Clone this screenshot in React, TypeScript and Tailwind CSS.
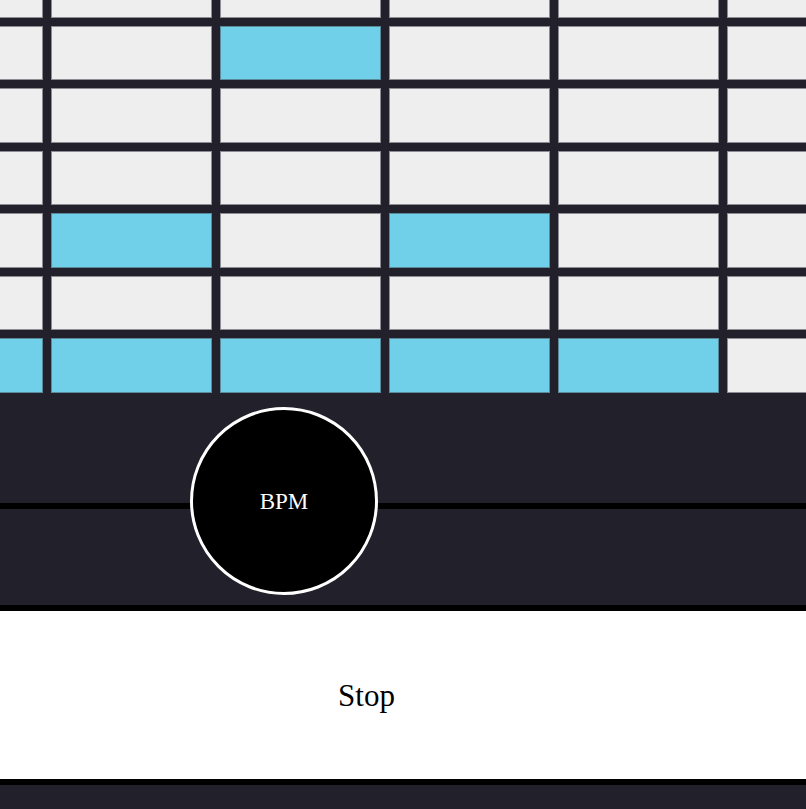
import React from "react";

const rows: number[][] = [
  [0, 0, 0, 0, 0, 0],
  [0, 0, 1, 0, 0, 0],
  [0, 0, 0, 0, 0, 0],
  [0, 0, 0, 0, 0, 0],
  [0, 1, 0, 1, 0, 0],
  [0, 0, 0, 0, 0, 0],
  [1, 1, 1, 1, 1, 0],
];

export default function App() {
  return (
    <div
      className="w-[806px] h-[809px] overflow-hidden bg-[#22212b] flex flex-col"
      style={{ fontFamily: '"Liberation Serif", "Times New Roman", serif' }}
    >
      {/* step grid */}
      <div className="h-[393px] shrink-0 overflow-hidden">
        <div className="grid grid-cols-[repeat(6,161px)] grid-rows-[repeat(7,54.57px)] gap-2 -mt-[37px] -ml-[118px] w-max">
          {rows.flatMap((row, r) =>
            row.map((on, c) => (
              <div
                key={`${r}-${c}`}
                className={
                  on
                    ? "bg-[#70d0ea] border border-[#5a8a9a]"
                    : "bg-[#eeeeee] border border-[#8c8c92]"
                }
              />
            ))
          )}
        </div>
      </div>

      {/* tempo slider */}
      <div className="relative h-[212px] shrink-0 bg-[#22212b]">
        <div className="mt-[110px] h-[6px] bg-black" />
        <div className="absolute left-[190px] top-[14px] w-[188px] h-[188px] rounded-full bg-black border-[3px] border-white flex items-center justify-center">
          <span
            className="text-white text-[23px] leading-none"
            style={{ fontFamily: '"Liberation Serif", serif' }}
          >
            BPM
          </span>
        </div>
      </div>

      <div className="h-[6px] shrink-0 bg-black" />

      <button
        className="h-[168px] shrink-0 bg-white flex items-center justify-center pr-[73px] text-black text-[31px] leading-none"
        style={{ fontFamily: '"Liberation Serif", serif' }}
      >
        Stop
      </button>

      <div className="h-[6px] shrink-0 bg-black" />
      <div className="flex-1 bg-[#22212b]" />
    </div>
  );
}
